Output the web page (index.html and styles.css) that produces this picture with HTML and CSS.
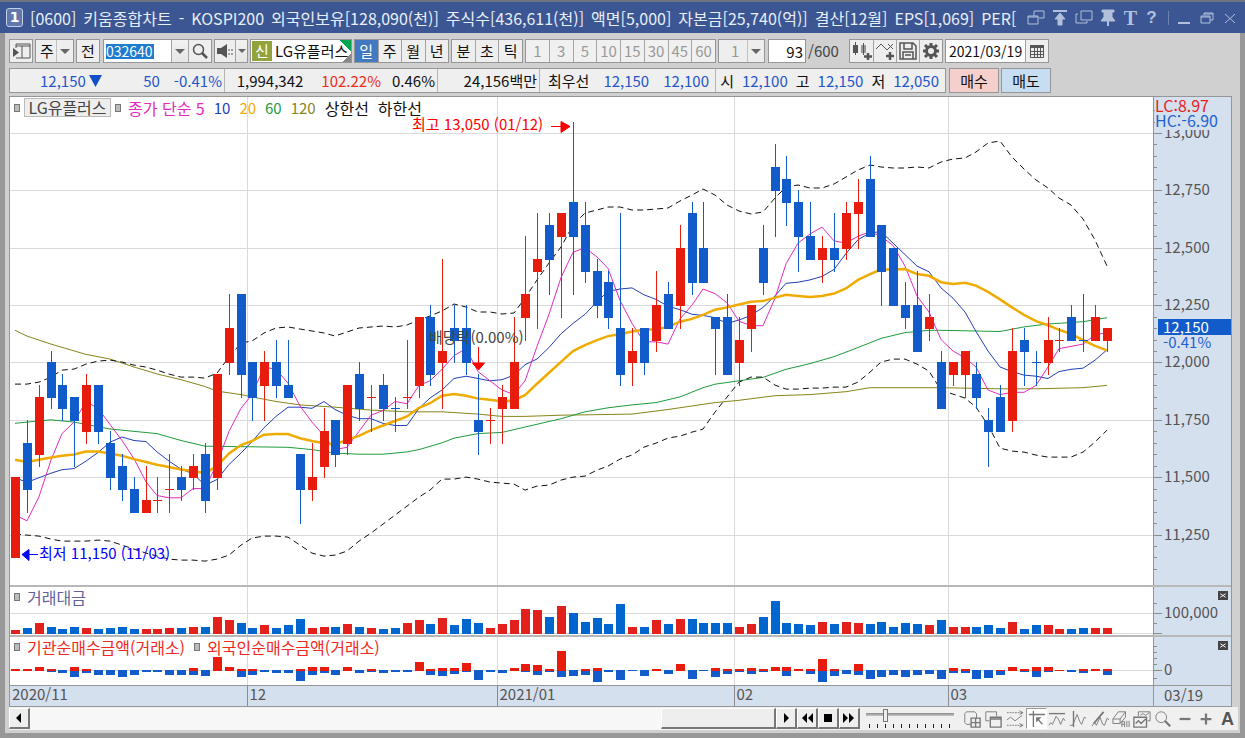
FILE: index.html
```html
<!DOCTYPE html>
<html lang="ko">
<head>
  <meta charset="UTF-8">
  <meta name="viewport" content="width=device-width, initial-scale=1.0">
  <title>[0600] 키움종합차트</title>
  <link rel="stylesheet" href="styles.css">
</head>
<body>
  <div class="window">
    <header class="titlebar">
      <span class="win-no">1</span>
      <h1 class="title">
        <span>[0600]</span><span>키움종합차트</span><span>-</span><span>KOSPI200</span>
        <span>외국인보유[128,090(천)]</span><span>주식수[436,611(천)]</span><span>액면[5,000]</span>
        <span>자본금[25,740(억)]</span><span>결산[12월]</span><span>EPS[1,069]</span><span>PER[</span>
      </h1>
      <div class="win-icons">
        <button aria-label="화면 연결"><svg viewBox="0 0 18 18"><path d="M7 2h10v7h-5M1 7h10v8H1zM7 2v5M1 8h10"/></svg></button>
        <button aria-label="맨 위로"><svg viewBox="0 0 18 18"><path d="M2 2h14" stroke-width="2"/><path class="fill" d="M9 4l5 6h-3v6H7v-6H4z"/></svg></button>
        <button aria-label="화면 복사"><svg viewBox="0 0 18 18"><path d="M6 2h11v9H6zM3 5H1v9h11v-2"/></svg></button>
        <button aria-label="고정"><svg viewBox="0 0 18 18"><path class="fill" d="M3 1h12v2h-2v5l3 4H2l3-4V3H3z"/><path d="M9 12v5" stroke-width="2"/></svg></button>
        <button class="glyph serif" aria-label="글꼴">T</button>
        <button class="glyph" aria-label="도움말">?</button>
      </div>
      <div class="win-ctrl">
        <button aria-label="최소화"><svg viewBox="0 0 14 14"><path d="M1 12h12" stroke-width="2"/></svg></button>
        <button aria-label="복원"><svg viewBox="0 0 14 14"><path d="M4 4V2h9v7h-3M1 5h9v7H1zM1 6h9M4 3h9"/></svg></button>
        <button aria-label="닫기"><svg viewBox="0 0 14 14"><path d="M2 3l10 9M12 3L2 12"/></svg></button>
      </div>
    </header>

    <main class="frame">
      <div class="toolbar">
        <button class="btn icon" aria-label="목록"><svg viewBox="0 0 20 20"><path d="M5 3h14v14H5M5 5h14M11 5v12M5 3v4"/><path class="fill" d="M2 7l6 4.500L2 16z"/></svg></button>
        <select class="combo" aria-label="종목 구분"><option>주</option></select>
        <button class="btn">전</button>
        <div class="group code">
          <input class="code-input" aria-label="종목코드" value="032640">
          <button class="arrow" aria-label="최근 종목"></button>
          <button class="icon" aria-label="검색"><svg viewBox="0 0 20 20"><circle cx="8.500" cy="8.500" r="5" stroke-width="1.500"/><path d="M12 12l5 5" stroke-width="2.500"/></svg></button>
        </div>
        <div class="group sounds">
          <button class="icon sound" aria-label="소리"><svg viewBox="0 0 20 20"><path class="fill" d="M2 7h4l6-4v14l-6-4H2z"/><path d="M14 8v2M17 8v2M14 12v2M17 12v2"/></svg></button>
          <button class="arrow slim" aria-label="소리 설정"></button>
        </div>
        <div class="stock"><b>신</b><span>LG유플러스</span></div>
        <div class="group period">
          <button class="on">일</button><button>주</button><button>월</button><button>년</button>
        </div>
        <div class="group period three">
          <button>분</button><button>초</button><button>틱</button>
        </div>
        <div class="group period off">
          <button disabled>1</button><button disabled>3</button><button disabled>5</button><button disabled>10</button><button disabled>15</button><button disabled>30</button><button disabled>45</button><button disabled>60</button>
        </div>
        <select class="combo wide" aria-label="분 단위" disabled><option>1</option></select>
        <label class="count"><input aria-label="봉 개수" value="93">/600</label>
        <div class="group tools">
          <button class="icon" aria-label="차트 추가"><svg viewBox="0 0 20 20"><path class="fill" d="M1 4h5v8H1z"/><path class="fill soft" d="M9 4h5v8H9z"/><path d="M3.500 1v13M11.500 2v12"/><path d="M16 12v7M12 15.500h8" stroke-width="2.500"/></svg></button>
          <button class="icon" aria-label="지표 추가"><svg viewBox="0 0 20 20"><path d="M1 8l5-5 6 6 6-6M13 3l5 5"/><path d="M15 11v8M11 15h8" stroke-width="2.500"/></svg></button>
          <button class="icon" aria-label="저장"><svg viewBox="0 0 20 20"><path d="M2 2h13l3 3v13H2zM6 2v6h8V2M5 18v-7h10v7M7 14h6" stroke-width="1.500"/></svg></button>
          <button class="icon" aria-label="설정"><svg viewBox="0 0 20 20"><circle cx="10" cy="10" r="4.500" stroke-width="3"/><path d="M10 2v3M10 15v3M2 10h3M15 10h3M4 4l3 3M13 13l3 3M16 4l-3 3M7 13l-3 3" stroke-width="3"/></svg></button>
        </div>
        <div class="group date">
          <input aria-label="기준일" value="2021/03/19">
          <button class="icon" aria-label="달력"><svg viewBox="0 0 20 20"><path d="M3.500 4.500h13v12h-13zM3 10.500h14M3 13.500h14M7.500 7v10M10.500 7v10M13.500 7v10"/><path d="M3 5.500h14" stroke-width="3"/></svg></button>
        </div>
      </div>

      <div class="info-row">
        <dl class="quote">
          <div class="c-now down"><dd>12,150<svg class="tri" viewBox="0 0 13 12"><path d="M0 0h13L6.500 12z"/></svg></dd><dd>50</dd><dd>-0.41%</dd></div>
          <div class="c-vol"><dd>1,994,342</dd><dd class="up">102.22%</dd><dd>0.46%</dd></div>
          <div class="c-amt"><dd>24,156백만</dd></div>
          <div class="c-best"><dt>최우선</dt><dd class="down">12,150</dd><dd class="down">12,100</dd></div>
          <div class="c-ohl"><dt>시</dt><dd class="down">12,100</dd><dt>고</dt><dd class="down">12,150</dd><dt>저</dt><dd class="down">12,050</dd></div>
        </dl>
        <button class="order buy">매수</button>
        <button class="order sell">매도</button>
      </div>

      <section class="chart">
        <div class="panel price">
          <svg id="pricePlot" class="plot"></svg>
          <svg id="priceAxis" class="axis"></svg>
          <div class="legend">
            <i></i><button class="name">LG유플러스</button><i></i>
            <span class="ma5">종가 단순 5</span><span class="ma10">10</span><span class="ma20">20</span><span class="ma60">60</span><span class="ma120">120</span><span>상한선</span><span>하한선</span>
          </div>
          <div class="limits"><span class="lc">LC:8.97</span><span class="hc">HC:-6.90</span></div>
          <div class="now" id="nowTag"><b>12,150</b><span>-0.41%</span></div>
        </div>
        <div class="panel sub">
          <svg id="volPlot" class="plot"></svg>
          <svg id="volAxis" class="axis"></svg>
          <div class="legend"><i></i><span class="vol">거래대금</span></div>
          <button class="close" aria-label="거래대금 닫기"><svg viewBox="0 0 10 10"><path d="M2 3l6 4M8 3L2 7"/></svg></button>
        </div>
        <div class="panel sub last">
          <svg id="netPlot" class="plot"></svg>
          <svg id="netAxis" class="axis"></svg>
          <div class="legend"><i></i><span class="net">기관순매수금액(거래소)</span><i></i><span class="net">외국인순매수금액(거래소)</span></div>
          <button class="close" aria-label="순매수 닫기"><svg viewBox="0 0 10 10"><path d="M2 3l6 4M8 3L2 7"/></svg></button>
        </div>
        <div class="panel time">
          <svg id="timePlot" class="plot"></svg>
          <span class="last-day">03/19</span>
        </div>
      </section>

      <footer class="bottom">
        <button class="sb" aria-label="왼쪽"><svg viewBox="0 0 12 12"><path d="M8 1v10L3 6z"/></svg></button>
        <div class="track"><div class="thumb"></div></div>
        <button class="sb" aria-label="오른쪽"><svg viewBox="0 0 12 12"><path d="M4 1v10l5-5z"/></svg></button>
        <button class="sb" aria-label="뒤로"><svg viewBox="0 0 12 12"><path d="M6 1v10L1 6zM12 1v10L7 6z"/></svg></button>
        <button class="sb" aria-label="정지"><svg viewBox="0 0 12 12"><path d="M2 2h8v8H2z"/></svg></button>
        <button class="sb" aria-label="앞으로"><svg viewBox="0 0 12 12"><path d="M0 1v10l5-5zM6 1v10l5-5z"/></svg></button>
        <div class="speed">
          <input type="range" min="0" max="10" value="2" aria-label="속도">
          <div class="marks"></div>
        </div>
        <div class="draw">
          <button aria-label="창 추가"><svg viewBox="0 0 20 20"><path d="M9 16H4l-2-2V4l2-2h9l2 2v5"/><path d="M9 9h10v10H9zM14 9v10M9 14h10" stroke-width="1.500"/></svg></button>
          <button aria-label="창 겹치기"><svg viewBox="0 0 20 20"><path d="M6 12H2V2h12v5"/><path d="M7 8h12v11H7zM7 10h12" stroke-width="1.500"/></svg></button>
          <button aria-label="구간"><svg viewBox="0 0 20 20"><path d="M1 3h17M1 17h17" stroke-dasharray="2 1"/><path d="M1 11l4-3 5 4 8-6M15 1l4 2-4 2M15 15l4 2-4 2"/></svg></button>
          <button class="on" aria-label="십자선"><svg viewBox="0 0 20 20"><path d="M1 5h18M6 1v18" stroke-width="1.500"/><path d="M11 10l5 6" stroke-width="1.500"/><path class="fill" d="M9 8h6l-6 6z"/></svg></button>
          <button aria-label="추세"><svg viewBox="0 0 20 20"><path d="M1 4h18" stroke-width="1.500"/><path d="M1 17l2-3 2 2 4-9 3 4 2 5 3-7 2 3"/></svg></button>
          <button aria-label="파동"><svg viewBox="0 0 20 20"><path d="M5 1v18" stroke-width="1.500"/><path d="M1 17h3l5-12 3 8 2 3 3-8 2 1"/></svg></button>
          <button aria-label="추세선"><svg viewBox="0 0 20 20"><path d="M3 15L14 2" stroke-width="2"/><path d="M1 18l3-4 2 3 4-9 3 8 2 1 3-8 2 2"/></svg></button>
          <button aria-label="모두 지우기"><svg viewBox="0 0 20 20"><path d="M1 10l6-8h8l-6 8zM1 10v5h8v-5M9 15l6-7V2M11 19v-6h3v6M11 16h3M16.500 12v7M19 12v7"/></svg></button>
          <button aria-label="차트 비교"><svg viewBox="0 0 20 20"><path d="M6 7V2h13v10h-3M8 6l3-2 3 2 4-3"/><path d="M1 8h14v11H1zM3 15l3-3 3 3 5-5" stroke-width="1.500"/></svg></button>
          <button aria-label="돋보기"><svg viewBox="0 0 20 20"><circle cx="8" cy="8" r="6"/><path d="M12 12l6 6" stroke-width="2.500"/></svg></button>
          <button aria-label="축소"><svg viewBox="0 0 20 20"><path d="M4 10h12" stroke-width="2.500"/></svg></button>
          <button aria-label="확대"><svg viewBox="0 0 20 20"><path d="M4 10h12M10 4v12" stroke-width="2.500"/></svg></button>
          <button class="letter" aria-label="자동">A</button>
        </div>
      </footer>
    </main>
  </div>
  <script src="chart.js"></script>
</body>
</html>
```

FILE: styles.css
```css
* {
  box-sizing: border-box;
}

body {
  margin: 0;
  background: #d0d0d0;
  color: #111;
  font-family: "Noto Sans CJK KR", sans-serif;
  font-size: 15px;
  line-height: 20px;
}

button, input, select {
  margin: 0;
  padding: 0;
  border: 0;
  border-radius: 0;
  background: none;
  color: inherit;
  font: inherit;
}

svg {
  display: block;
}

.window {
  display: flex;
  flex-direction: column;
  min-height: 100vh;
}

/* title bar */
.titlebar {
  display: flex;
  align-items: center;
  height: 33px;
  padding: 0 8px 0 6px;
  background: #3b5692;
  border-top: 2px solid #6e7480;
  color: #e8eef8;
}

.win-no {
  width: 17px;
  height: 19px;
  border: 1px solid #c4cee4;
  border-radius: 3px;
  background: #5f78ad;
  color: #fff;
  font: bold 14px/17px "DejaVu Sans", sans-serif;
  text-align: center;
}

.title {
  display: flex;
  flex: 1;
  gap: 7px;
  min-width: 0;
  margin: 0 0 0 7px;
  font-size: 16px;
  font-weight: normal;
  line-height: 24px;
  white-space: nowrap;
}

.win-icons, .win-ctrl {
  display: flex;
  align-items: center;
  gap: 6px;
  color: #b3c0dc;
}

.win-ctrl {
  gap: 9px;
  margin-left: 9px;
  padding-left: 8px;
  border-left: 1px solid #7083b0;
}

.win-icons svg {
  width: 18px;
  height: 18px;
}

.win-ctrl svg {
  width: 14px;
  height: 14px;
}

.win-icons path, .win-ctrl path {
  fill: none;
  stroke: currentColor;
}

.win-icons .fill {
  fill: currentColor;
}

.glyph {
  width: 15px;
  font: bold 17px/20px "Liberation Sans", sans-serif;
}

.serif {
  font-family: "Liberation Serif", serif;
  font-size: 20px;
}

/* frame */
.frame {
  display: flex;
  flex: 1;
  flex-direction: column;
  padding: 6px 2px 3px 4px;
  border: solid #989898;
  border-width: 0 5px 5px;
}

.toolbar {
  display: flex;
  gap: 2px;
  height: 24px;
}

.btn, .group, .combo, .stock, .count input {
  height: 24px;
  border: 1px solid #969696;
  background: #eee;
}

.btn {
  width: 24px;
}

.icon {
  display: flex;
  align-items: center;
  justify-content: center;
  color: #555;
}

.icon svg {
  width: 20px;
  height: 20px;
  fill: none;
  stroke: currentColor;
}

.icon .fill {
  fill: currentColor;
  stroke: none;
}

.icon .soft {
  fill: #999;
}

.combo {
  width: 39px;
  padding-left: 4px;
  appearance: none;
  background: #eee url('data:image/svg+xml,<svg xmlns="http://www.w3.org/2000/svg" width="17" height="22"><path d="M0 0v22" stroke="%23969696"/><path d="M4 9h10l-5 5z" fill="%23666"/></svg>') right center no-repeat;
}

.combo.wide {
  width: 47px;
  padding-left: 12px;
  color: #999;
  opacity: 1;
}

.group {
  display: flex;
}

.group button {
  width: 23px;
  border-left: 1px solid #a4a4a4;
}

.group button:first-child {
  border-left: 0;
}

.code {
  margin-left: 1px;
}

.code-input {
  width: 67px;
  padding-left: 2px;
  background: linear-gradient(#1d7bd0, #1d7bd0) 2px 4px / 48px 15px no-repeat #fff;
  color: #fff;
  font-size: 14px;
}

.group .arrow {
  width: 17px;
  background: linear-gradient(#f2f2f2, #e6e6e6);
}

.arrow::before {
  content: "";
  display: block;
  width: 0;
  margin: 0 auto;
  border: 5px solid transparent;
  border-top-color: #666;
  border-bottom: 0;
}

.sounds .slim {
  width: 12px;
}

.slim::before {
  border-width: 4px 4px 0;
}

.sounds .sound {
  width: 20px;
}

.stock {
  display: flex;
  align-items: center;
  width: 102px;
  padding: 1px;
  background: linear-gradient(225deg, #00a651 8px, transparent 8px), linear-gradient(315deg, #888 6px, transparent 6px), #fff;
  white-space: nowrap;
}

.stock b {
  width: 20px;
  margin-right: 3px;
  background: #93a33b;
  color: #fff;
  font-weight: normal;
  text-align: center;
}

.period {
  width: 95px;
}

.three {
  width: 72px;
}

.off {
  width: 191px;
}

.period button {
  flex: 1;
}

.period .on {
  background: #4379c0;
  color: #fff;
}

.off button {
  background: #f0f0f0;
  color: #999;
}

.count {
  display: flex;
  align-items: center;
  width: 78px;
  margin-left: 1px;
  color: #444;
}

.count input {
  width: 38px;
  margin-right: 2px;
  padding-right: 2px;
  background: #fff;
  color: #111;
  text-align: right;
}

.tools {
  margin-left: 1px;
}

.date input {
  width: 79px;
  padding-left: 3px;
  background: #fff;
  font-size: 14px;
}

/* quote line */
.info-row {
  display: flex;
  gap: 3px;
  height: 25px;
  margin: 5px 0 3px;
}

.quote {
  display: flex;
  margin: 0;
  border: 1px solid #969696;
  background: #efefef;
}

.quote div {
  display: flex;
  align-items: center;
  justify-content: flex-end;
  gap: 14px;
  padding: 0 2px;
  border-right: 1px solid #b4b4b4;
}

.quote div:last-child {
  border-right: 0;
}

.quote dd, .quote dt {
  margin: 0;
}

.quote dd {
  text-align: right;
  min-width: 44px;
}

.tri {
  display: inline-block;
  width: 13px;
  height: 12px;
  margin-left: 3px;
  fill: #1350c8;
}

.quote .c-now {
  width: 215px;
}

.quote .c-vol {
  width: 213px;
  gap: 10px;
}

.c-vol dd:first-child {
  margin-right: 8px;
}

.quote .c-amt {
  width: 102px;
}

.quote .c-best {
  width: 176px;
  padding-right: 6px;
}

.quote .c-ohl {
  width: 229px;
  gap: 8px;
  padding-right: 6px;
}

.down {
  color: #1f56cc;
}

.up {
  color: #f02a1c;
}

.order {
  width: 50px;
  border: 1px solid #969696;
}

.buy {
  background: #f5cfcb;
}

.sell {
  background: #c7ddf2;
  margin-left: -1px;
}

/* chart */
.chart {
  display: flex;
  flex: 1;
  flex-direction: column;
  margin-right: 6px;
  border: 1px solid #969696;
  background: #fff;
}

.panel {
  position: relative;
  display: grid;
  grid-template-columns: minmax(0, 1fr) 78px;
  border-bottom: 2px solid #b8b8b8;
}

.price {
  flex: 1;
  min-height: 300px;
}

.sub {
  grid-template-rows: 100%;
  height: 50px;
}

.last {
  height: 49px;
  border-bottom: 1px solid #969696;
}

.time {
  grid-template-rows: 100%;
  height: 20px;
  border-bottom: 0;
  background: #d5e0ee;
}

.plot, .axis {
  width: 100%;
  height: 100%;
  overflow: hidden;
}

.price .plot, .price .axis {
  height: 0;
  min-height: 100%;
}

.time .plot {
  overflow: visible;
}

.axis, .last-day {
  background: #d5e0ee;
  border-left: 1px solid #969696;
}

.last-day {
  padding-left: 10px;
  color: #555;
  line-height: 18px;
}

.legend {
  position: absolute;
  top: 1px;
  left: 4px;
  display: flex;
  align-items: center;
  gap: 9px;
  height: 19px;
  font-size: 16px;
}

.legend i {
  width: 6px;
  height: 8px;
  margin-right: -5px;
  border: 1px solid #777;
  background: #bbb;
}

.legend .name {
  width: 87px;
  height: 19px;
  margin: 0 -5px 0 0;
  border: 1px solid #bbb;
  background: #eee;
  color: #444;
  line-height: 17px;
}

.legend .ma5 {
  margin-left: 3px;
}

.legend .ma10, .legend .ma20, .legend .ma60, .legend .ma120 {
  font-size: 15px;
}

.ma5 { color: #e52bbd; }
.ma10 { color: #2340b8; }
.ma20 { color: #f0ab00; }
.ma60 { color: #1f9c3c; }
.ma120 { color: #87851a; }
.vol { color: #64629c; }
.net { color: #ee2a1e; }

.sub .legend {
  top: 0;
}

.sub .legend span {
  margin-left: 3px;
}

.limits {
  position: absolute;
  top: 1px;
  right: 1px;
  display: flex;
  flex-direction: column;
  width: 75px;
  height: 32px;
  background: #d5e0ee;
  font-size: 16px;
  line-height: 15px;
}

.lc {
  color: #e8221b;
}

.hc, .now span {
  color: #1d62d0;
}

.now {
  position: absolute;
  right: 0;
  display: flex;
  flex-direction: column;
  width: 73px;
  line-height: 14px;
}

.now b {
  padding-left: 5px;
  background: #125bca;
  color: #fff;
  font-weight: normal;
  line-height: 16px;
}

.now span {
  padding-left: 5px;
  background: linear-gradient(90deg, transparent 4px, #d5e0ee 4px);
}

.close {
  position: absolute;
  top: 4px;
  right: 3px;
  width: 10px;
  height: 9px;
  background: #444;
}

.close svg {
  width: 10px;
  height: 9px;
  stroke: #fff;
}

/* marks drawn by chart.js */
.grid { stroke: #dadada; }
.tick { stroke: #8c8c8c; }
.axis-label { fill: #555; }
.bull { fill: #e81c0c; }
.bear { fill: #125bca; }
.vol-bull { fill: #e3211c; }
.vol-bear { fill: #0066cf; }
.line { fill: none; stroke: currentColor; }
.line.ma20 { stroke-width: 2.5; }
.line.band { stroke: #111; stroke-dasharray: 6 4; }
.note-high { fill: #f00; stroke: #f00; }
.note-low { fill: #00f; stroke: #00f; }
.note-div { fill: #444; }
.chart text { stroke: none; font-size: 15px; }

/* bottom bar */
.bottom {
  display: flex;
  height: 23px;
  padding-top: 1px;
  background: #f0f0f0;
}

.sb {
  display: flex;
  align-items: center;
  justify-content: center;
  width: 21px;
  height: 21px;
  border: 1px solid #fff;
  border-right: 2px solid #777;
  border-bottom: 2px solid #777;
  background: #eee;
}

.sb svg {
  width: 12px;
  height: 12px;
}

.track {
  display: flex;
  flex: 1;
  justify-content: flex-end;
  background: #f7f7f7;
}

.thumb {
  width: 115px;
  height: 21px;
  border: 1px solid #fff;
  border-right: 2px solid #777;
  border-bottom: 2px solid #777;
  background: #eee;
}

.speed {
  width: 88px;
  margin: 0 8px 0 6px;
}

.speed input {
  display: block;
  width: 100%;
  height: 14px;
  appearance: none;
  background: linear-gradient(#8a8a8a, #c8c8c8) 0 5px / 100% 3px no-repeat;
}

.speed input::-webkit-slider-thumb {
  appearance: none;
  width: 5px;
  height: 13px;
  border: 1px solid #777;
  background: #eee;
}

.marks {
  height: 4px;
  margin: 2px 0 0 3px;
  background: repeating-linear-gradient(90deg, #222 0 1px, transparent 1px 8px);
}

.draw {
  display: flex;
  justify-content: space-between;
  width: 276px;
  color: #777;
}

.draw button {
  width: 21px;
  height: 21px;
}

.draw svg {
  width: 18px;
  height: 18px;
  margin: 1px;
  fill: none;
  stroke: currentColor;
}

.draw .fill {
  fill: currentColor;
  stroke: none;
}

.draw .on {
  border: 1px solid #999;
  border-color: #999 #fff #fff #999;
  background: #fff;
}

.letter {
  color: #555;
  font: bold 18px/20px "Liberation Sans", sans-serif;
}
```

FILE: chart.js
```js
// prices are in ticks of 50 won: [open, high, low, close]
const TICK = 50;
const candles = [
  [223,230,223,230],[233,235,227,229],[232,238,231,237],[240,241,236,237],[238,239,235,236],[237,237,231,235],
  [234,239,233,238],[238,238,233,234],[233,234,229,230],[231,232,228,229],[229,230,227,227],[227,231,227,228],
  [228,230,227,228],[229,232,227,229],[230,231,228,229],[230,232,229,231],[232,233,227,228],[230,239,229,239],
  [240,246,239,243],[246,246,237,239],[240,240,235,237],[238,241,235,240],[240,242,237,238],[238,242,237,237],
  [232,232,226,229],[229,233,228,230],[231,236,230,234],[235,235,231,232],[233,238,232,238],[239,240,235,236],
  [237,238,234,237],[238,239,235,236],[236,237,234,236],[237,242,236,237],[238,244,237,244],[244,245,238,239],
  [240,249,236,241],[243,245,240,242],[243,245,239,240],[235,239,232,234],[235,236,233,235],[236,238,233,237],
  [236,244,236,240],[244,251,242,246],[248,253,243,249],[252,253,246,249],[251,253,244,253],[254,261,246,251],
  [252,254,247,248],[248,249,244,245],[247,248,243,244],[243,253,238,239],[240,243,238,241],[243,243,239,240],
  [242,248,241,245],[246,247,243,243],[245,252,243,250],[253,254,246,247],[250,254,247,247],[244,244,239,243],
  [244,246,239,239],[240,244,238,242],[243,245,241,245],[250,252,246,247],[257,259,251,255],[256,258,252,254],
  [254,255,248,251],[251,254,249,249],[249,251,247,250],[250,253,248,249],[250,254,249,253],[253,256,250,254],
  [256,258,251,251],[252,252,245,248],[250,250,245,245],[245,247,243,244],[245,248,241,241],[243,246,242,244],
  [240,241,236,236],[239,240,238,240],[239,241,237,241],[239,240,236,237],[235,236,231,234],[237,238,234,234],
  [235,243,234,241],[242,243,238,241],[240,241,238,240],[240,244,239,242],[242,243,241,242],[244,245,242,242],
  [242,246,241,242],[242,245,242,244],[242,243,241,243]
];
// closes before the first candle, needed by the averages
const before = [233,233,233,233,233,233,234,233,233,233,233,233,233,233,234,231.5,226.5,221,224.5];

// slow averages: [candle index, tick]
const ma60 = [[0,234.7],[3,235],[5,234.8],[8,234.2],[12,233.8],[14,233.2],[16,232.7],[20,232.65],[23,232.6],[25,232.4],
  [27,232.1],[29,232],[31,232],[33,232.2],[34,232.4],[36,233],[37,233.4],[39,233.8],[41,233.9],[46,235.1],[48,235.7],
  [50,236.05],[52,236.3],[54,236.5],[56,237],[58,237.8],[59,238.1],[61,238.4],[63,238.7],[65,239.4],[67,239.9],
  [69,240.5],[71,241.3],[73,242.1],[75,242.6],[77,242.8],[78,242.8],[83,242.7],[85,243.1],[87,243.35],[90,243.55],[92,243.9]];
const ma120 = [[0,242.8],[1,242.3],[3,241.6],[6,240.7],[8,240.3],[10,239.6],[12,239],[14,238.5],[16,237.9],[17,237.5],
  [19,237.2],[20,237],[22,236.6],[24,236.3],[27,236.1],[30,235.85],[33,235.7],[36,235.7],[39,235.5],[41,235.3],
  [43,235.3],[46,235.4],[52,235.5],[55,235.9],[59,236.5],[61,236.7],[64,237.1],[67,237.2],[70,237.45],[72,237.8],
  [78,237.8],[83,237.7],[86,237.7],[90,237.8],[92,238]];

// upper and lower band, one value per candle: steps below 13,000, BAND_STEP of them to a tick
const BAND_STEP = 11.47;
const upper = [251,251,249,244,237,236,231,228,227,229,232,234,237,241,244,244,245,240,224,210,208,200,195,194,196,198,200,
  203,199,195,194,193,194,192,187,183,178,171,174,179,179,181,180,165,147,130,114,92,80,77,74,74,77,77,76,75,68,62,56,
  62,72,78,81,79,65,54,52,55,55,51,44,37,32,34,35,35,34,35,29,26,25,19,10,8,24,36,47,55,65,72,86,107,133];
const lower = [401,402,403,406,408,408,408,407,408,412,416,420,423,426,427,427,428,426,422,412,405,403,403,404,412,420,423,
  422,418,408,400,391,382,373,364,357,346,346,344,346,349,350,351,357,353,352,347,344,343,337,333,326,322,314,310,305,303,
  299,296,279,264,249,244,244,252,256,256,255,255,254,254,249,239,229,226,226,231,238,257,261,265,274,292,315,318,319,322,
  324,324,324,319,309,297];

// traded value, 20 = 100,000
const volume = [4,6,11,7,5,7,6,5,6,7,5,5,5,6,6,7,7,17,14,11,6,9,6,9,15,6,7,7,10,7,6,5,6,11,14,10,16,9,15,11,6,10,14,25,24,17,
  28,21,12,16,10,30,7,7,14,10,15,15,11,11,11,7,10,17,33,11,10,9,12,10,12,11,10,12,7,11,10,9,14,7,7,7,9,6,12,5,9,9,5,5,6,6,6];

// net buying above and below zero
const net = [[2,1],[2,0],[4,0],[2,2],[0,3],[4,7],[2,3],[0,5],[0,5],[0,7],[0,5],[0,2],[0,2],[0,5],[0,5],[3,5],[0,6],[14,0],
  [4,0],[2,7],[2,5],[0,2],[0,3],[0,3],[2,11],[4,5],[4,3],[0,5],[4,0],[0,3],[2,2],[0,3],[0,2],[0,2],[9,0],[2,5],[3,6],[3,4],
  [8,2],[0,10],[0,2],[0,3],[3,0],[7,2],[6,5],[2,2],[20,7],[0,6],[2,5],[3,12],[0,2],[0,10],[0,1],[0,6],[2,0],[0,4],[7,0],
  [0,9],[0,1],[3,7],[2,4],[2,2],[3,4],[2,2],[4,0],[4,6],[2,1],[2,4],[12,12],[2,6],[0,4],[7,5],[0,9],[0,7],[0,5],[0,7],
  [0,5],[0,4],[0,9],[3,3],[2,3],[0,9],[0,8],[1,5],[4,0],[2,2],[4,7],[4,2],[1,1],[0,2],[2,3],[2,0],[2,5]];

const months = [[0, '2020/11'], [20, '12'], [41, '2021/01'], [61, '02'], [79, '03']];
const TOP = 263.14;
const SPAN = 42.54;

const $ = id => document.getElementById(id);
const closes = before.concat(candles.map(c => c[3]));
const SEED = before.length + 1;

function average(i, n) {
  const part = closes.slice(i + SEED - n, i + SEED);
  return part.reduce((a, b) => a + b, 0) / n;
}

// a flat candle takes its colour from the previous close
const rising = [];
candles.forEach((c, i) => {
  if (c[3] !== c[0]) rising.push(c[3] > c[0]);
  else if (c[3] !== candles[i - 1][3]) rising.push(c[3] > candles[i - 1][3]);
  else rising.push(rising[i - 1]);
});

const rect = (x, y, w, h, cls) => `<rect x="${x}" y="${y}" width="${w}" height="${h}" class="${cls}"/>`;
const seg = (x1, y1, x2, y2, cls) => `<path d="M${x1} ${y1}L${x2} ${y2}" class="${cls}"/>`;
const text = (x, y, s, cls) => `<text x="${x}" y="${y}" class="${cls}">${s}</text>`;

function draw() {
  const W = $('pricePlot').getBoundingClientRect().width;
  const H = $('pricePlot').getBoundingClientRect().height;
  const step = W / 96.3;
  const X = i => Math.round(5 + step * i);
  const Y = t => Math.round((TOP - t) / SPAN * H);
  const yf = t => ((TOP - t) / SPAN * H).toFixed(1);
  const line = (pts, cls) => `<polyline class="line ${cls}" points="${pts.map(p => X(p[0]) + ',' + yf(p[1])).join(' ')}"/>`;
  const series = f => candles.map((c, i) => [i, f(i)]);
  const monthX = months.slice(1).map(m => X(m[0]) - 5 + 0.5);
  const verticals = h => monthX.map(x => seg(x, 0, x, h, 'grid')).join('');

  let out = verticals(H);
  for (let t = 260; t > 221; t -= 5) out += seg(0, Y(t) + 0.5, W, Y(t) + 0.5, 'grid');
  out += line(ma120, 'ma120') + line(ma60, 'ma60');
  out += line(series(i => 260 - upper[i] / BAND_STEP), 'band');
  out += line(series(i => 260 - lower[i] / BAND_STEP), 'band');
  out += line(series(i => average(i, 10)), 'ma10');
  out += line(series(i => average(i, 5)), 'ma5');
  out += line(series(i => average(i, 20)), 'ma20');
  candles.forEach(([o, h, l, c], i) => {
    const cls = rising[i] ? 'bull' : 'bear';
    const top = Y(Math.max(o, c));
    out += rect(X(i), Y(h), 1, Y(l) - Y(h) + 1, cls);
    out += rect(X(i) - 4, top, 9, Y(Math.min(o, c)) - top + 1, cls);
  });

  // highest and lowest price, ex-dividend mark
  const hx = X(47), hy = Y(261) + 4;
  out += text(hx - 161, hy + 4, '최고 13,050 (01/12)', 'note-high');
  out += `<path class="note-high" d="M${hx - 22} ${hy + .5}h16m-6 -5l9 5l-9 6z"/>`;
  const ly = Y(223) - 3;
  out += `<path class="note-low" d="M28 ${ly + .5}h-16m7 -5l-7 5l7 6z"/>`;
  out += text(29, ly + 5, '최저 11,150 (11/03)', 'note-low');
  const dx = X(39), dy = Y(240);
  out += `<path class="note-high" d="M${dx + .5} ${dy - 15}v16h-6l6 7l6 -7h-6"/>`;
  out += text(dx - 49, dy - 19, '배당락(0.00%)', 'note-div');
  $('pricePlot').innerHTML = out;

  out = '';
  for (let t = 262; t > 221; t--) out += seg(0, Y(t) + 0.5, t % 5 ? 3 : 8, Y(t) + 0.5, 'tick');
  for (let t = 260; t > 221; t -= 5) out += text(10, Y(t) + 5, (t * TICK).toLocaleString('en-US'), 'axis-label');
  $('priceAxis').innerHTML = out;
  $('nowTag').style.top = Y(243) - 9 + 'px';

  out = verticals(60) + seg(0, 26.5, W, 26.5, 'grid') + seg(0, 46.5, W, 46.5, 'grid');
  volume.forEach((v, i) => out += rect(X(i) - 4, 47 - v, 9, v, rising[i] ? 'vol-bull' : 'vol-bear'));
  $('volPlot').innerHTML = out;
  $('volAxis').innerHTML = seg(0, 16.5, 3, 16.5, 'tick') + seg(0, 26.5, 8, 26.5, 'tick') + seg(0, 36.5, 3, 36.5, 'tick')
    + seg(0, 46.5, 8, 46.5, 'tick') + text(10, 31, '100,000', 'axis-label');

  out = verticals(60) + seg(0, 33.5, W, 33.5, 'grid');
  net.forEach(([up, down], i) => {
    if (down) out += rect(X(i) - 4, 33, 9, down, 'bear');
    if (up) out += rect(X(i) - 4, 34 - up, 9, up, 'bull');
  });
  $('netPlot').innerHTML = out;
  $('netAxis').innerHTML = [9, 15, 21, 27, 41].map(y => seg(0, y + .5, 3, y + .5, 'tick')).join('')
    + seg(0, 33.5, 8, 33.5, 'tick') + text(10, 38, '0', 'axis-label');

  $('timePlot').innerHTML = monthX.map(x => seg(x, 0, x, 20, 'tick')).join('')
    + months.map((m, i) => text(i ? monthX[i - 1] + 2 : 2, 14, m[1], 'axis-label')).join('');
}

draw();
window.addEventListener('resize', draw);
```
